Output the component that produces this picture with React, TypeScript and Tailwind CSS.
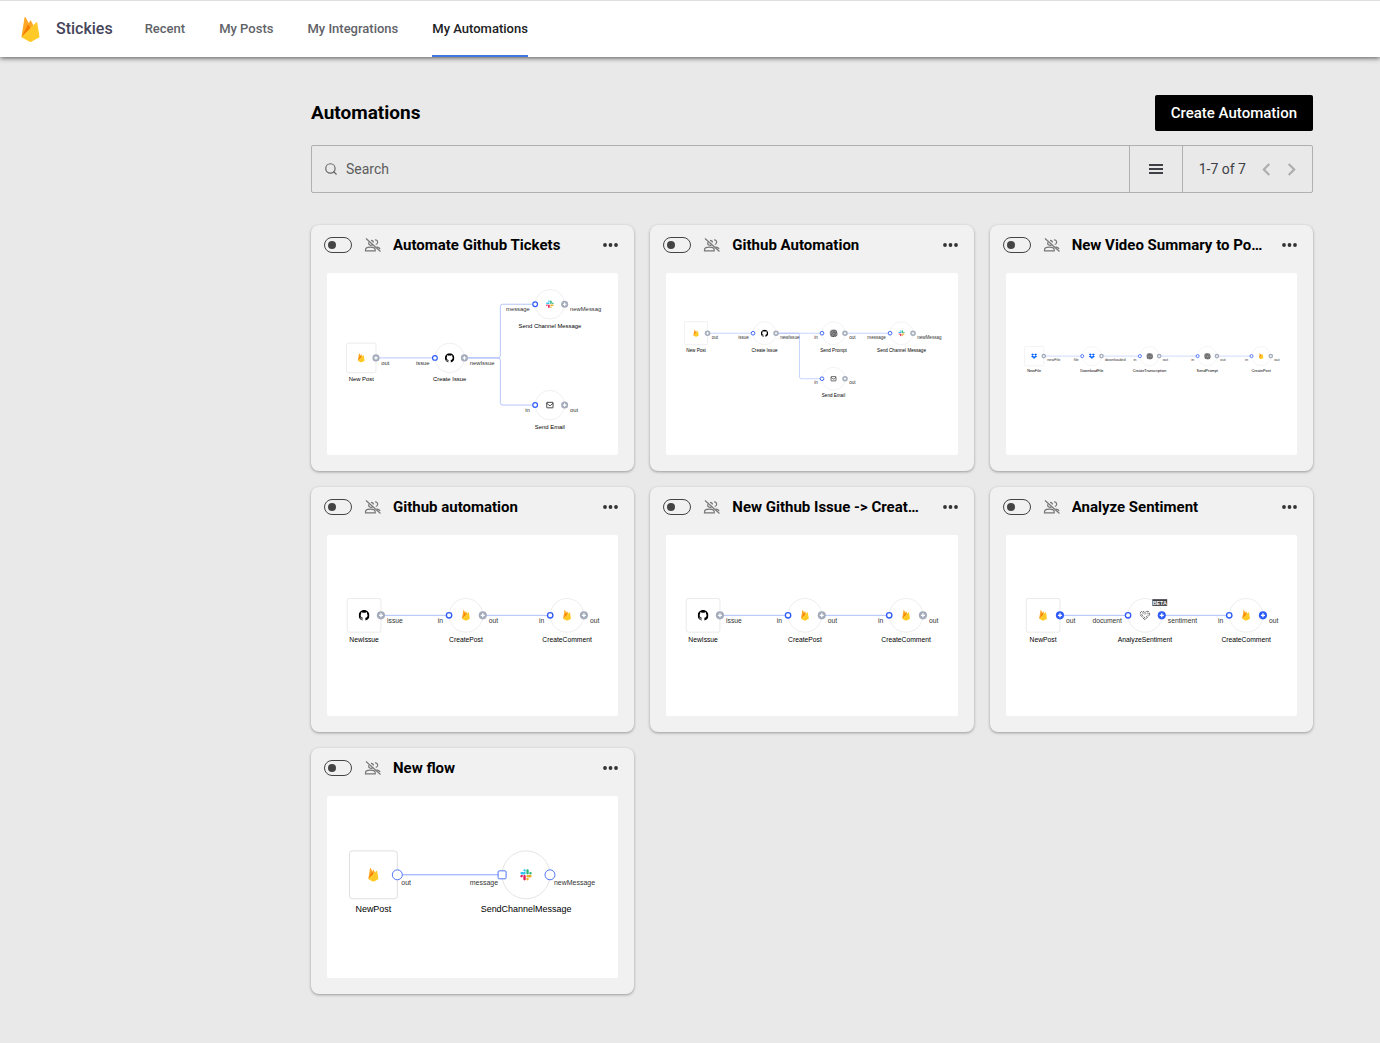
import { useState } from "react";
import type { ReactNode } from "react";
import { SiDropbox, SiGithub, SiOpenai } from "react-icons/si";
import { Search } from "lucide-react";
import { MdChevronLeft, MdChevronRight } from "react-icons/md";

type Brand = "firebase" | "github" | "slack" | "email" | "openai" | "dropbox" | "heart";

interface FlowNode {
  x: number;
  y: number;
  name: string;
  brand: Brand;
  input?: string;
  output: string;
  beta?: boolean;
}

interface Flow {
  title: string;
  width: number;
  height: number;
  nodes: FlowNode[];
  edges: string[];
  variant?: "muted" | "active" | "open";
}

function FirebaseShape() {
  return (
    <>
      <path fill="#FFA726" d="M3.300 19.365L6.255.461A.542.542 0 0 1 7.270.288L12 9z" />
      <path fill="#FFA726" d="M14.800 8.200L12.480 3.665a.542.542 0 0 0-.96 0L3.300 19.365z" />
      <path fill="#F57C00" d="M12.200 11L9.700 6.900L3.300 19.365z" />
      <path
        fill="#FFCA28"
        d="M20.684 19.364l-2.25-14a.54.54 0 0 0-.919-.295L3.316 19.365l7.856 4.427a1.621 1.621 0 0 0 1.588 0z"
      />
    </>
  );
}

function SlackShape() {
  return (
    <>
      <path
        fill="#E01E5A"
        d="M25.8 77.6c0 7.1-5.8 12.9-12.9 12.9S0 84.7 0 77.6s5.8-12.9 12.9-12.9h12.9v12.9zm6.5 0c0-7.1 5.8-12.9 12.9-12.9s12.9 5.8 12.9 12.9v32.3c0 7.1-5.8 12.9-12.9 12.9s-12.9-5.8-12.9-12.9V77.6z"
      />
      <path
        fill="#36C5F0"
        d="M45.2 25.8c-7.1 0-12.9-5.8-12.9-12.9S38.1 0 45.2 0s12.9 5.8 12.9 12.9v12.9H45.2zm0 6.5c7.1 0 12.9 5.8 12.9 12.9s-5.8 12.9-12.9 12.9H12.9C5.8 58.1 0 52.3 0 45.2s5.8-12.9 12.9-12.9h32.3z"
      />
      <path
        fill="#2EB67D"
        d="M97 45.2c0-7.1 5.8-12.9 12.9-12.9s12.9 5.8 12.9 12.9-5.8 12.9-12.9 12.9H97V45.2zm-6.5 0c0 7.1-5.8 12.9-12.9 12.9s-12.9-5.8-12.9-12.9V12.900C64.700 5.800 70.500 0 77.600 0s12.900 5.800 12.900 12.900v32.300z"
      />
      <path
        fill="#ECB22E"
        d="M77.6 97c7.1 0 12.9 5.8 12.9 12.9s-5.8 12.9-12.9 12.9-12.9-5.8-12.9-12.9V97h12.9zm0-6.5c-7.1 0-12.9-5.8-12.9-12.9s5.8-12.9 12.9-12.9h32.3c7.1 0 12.9 5.8 12.9 12.9s-5.8 12.9-12.9 12.9H77.6z"
      />
    </>
  );
}

/* Brand mark centred on a node. */
function BrandMark({ brand, x, y, size }: { brand: Brand; x: number; y: number; size: number }) {
  const box = { x: x - size / 2, y: y - size / 2, width: size, height: size };
  switch (brand) {
    case "firebase":
      return (
        <svg {...box} viewBox="0 0 24 24">
          <FirebaseShape />
        </svg>
      );
    case "slack":
      return (
        <svg {...box} viewBox="-14 -14 151 151">
          <SlackShape />
        </svg>
      );
    case "github":
      return <SiGithub {...box} color="#000000" />;
    case "dropbox":
      return <SiDropbox {...box} color="#0061FF" />;
    case "openai":
      return (
        <g>
          <rect x={x - 8} y={y - 8} width="16" height="16" rx="6" fill="#a3a3a3" />
          <SiOpenai x={x - 7} y={y - 7} width={14} height={14} color="#3f3f46" />
        </g>
      );
    case "email":
      return (
        <svg {...box} viewBox="0 0 24 24" fill="none" stroke="#18181b" strokeWidth="2">
          <rect x="4" y="5" width="16" height="14" rx="1" />
          <path d="M4 7l6 6h4l6-6" />
        </svg>
      );
    case "heart":
      return (
        <svg {...box} viewBox="0 0 24 24" fill="none" stroke="#27272a" strokeWidth="1.600">
          <path d="M12 22L3 12.500a5.500 5.500 0 0 1 0-8c2-2 5.500-2 7.500 0L12 6l1.500-1.500c2-2 5.500-2 7.500 0a5.500 5.500 0 0 1 0 8z" strokeDasharray="7 2" />
          <path d="M12 18l-6.500-7c-1-1.500-1-3 0-4s2.500-1 3.500 0l3 3 3-3c1-1 2.500-1 3.500 0s1 2.500 0 4z" strokeDasharray="4 3" />
        </svg>
      );
  }
}

function Port({ x, y, kind, variant }: { x: number; y: number; kind: "in" | "out"; variant: Flow["variant"] }) {
  if (variant === "open") {
    return kind === "in" ? (
      <rect x={x - 4} y={y - 4} width="8" height="8" rx="1" fill="#fff" stroke="#4f74f5" />
    ) : (
      <circle cx={x} cy={y} r="5" fill="#fff" stroke="#4f74f5" />
    );
  }
  if (kind === "in") {
    return <circle cx={x} cy={y} r="4" fill="#fff" stroke="#2f5bf6" strokeWidth="2" />;
  }
  return (
    <g>
      <circle cx={x} cy={y} r="6" fill={variant === "active" ? "#2f5bf6" : "#a3abba"} />
      <path d={`M${x - 3} ${y}h6M${x} ${y - 3}v6`} stroke="#fff" strokeWidth="2" />
    </g>
  );
}

function FlowDiagram({ flow }: { flow: Flow }) {
  const variant = flow.variant ?? "muted";
  const open = variant === "open";
  const half = open ? 24 : 25;
  const nameClass = open ? "text-[9px]" : "text-[10px]";
  const portClass = open ? "text-[7px]" : "text-[10px]";
  const nameDrop = open ? 37 : 40;
  const portDrop = open ? 10 : 12;
  const gap = open ? 4 : 9;
  return (
    <svg
      viewBox={`0 0 ${flow.width} ${flow.height}`}
      className="block h-full w-full font-['Liberation_Sans',Arial,sans-serif]"
      role="img"
      aria-label={`${flow.title} diagram`}
    >
      {flow.nodes.map((n) =>
        n.input ? (
          <circle key={n.name} cx={n.x} cy={n.y} r={half} fill="#fff" stroke="#e4e4e4" />
        ) : (
          <rect key={n.name} x={n.x - half} y={n.y - half} width={half * 2} height={half * 2} rx="3" fill="#fff" stroke="#dfdfdf" />
        ),
      )}
      {flow.edges.map((d) => (
        <path key={d} d={d} fill="none" stroke="#86a0f8" strokeWidth="1" />
      ))}
      {flow.nodes.map((n) => (
        <g key={n.name}>
          <BrandMark brand={n.brand} x={n.x} y={n.y} size={open ? 14 : 16} />
          {n.beta && (
            <g>
              <rect x={n.x + 11} y={n.y - 24} width="22" height="10" fill="#3f3f46" />
              <text x={n.x + 22} y={n.y - 16} textAnchor="middle" fill="#fff" className="text-[8px] font-bold">
                BETA
              </text>
            </g>
          )}
          {n.input && (
            <>
              <Port x={n.x - half} y={n.y} kind="in" variant={variant} />
              <text x={n.x - half - gap} y={n.y + portDrop} textAnchor="end" fill="#333" className={portClass}>
                {n.input}
              </text>
            </>
          )}
          <Port x={n.x + half} y={n.y} kind="out" variant={variant} />
          <text x={n.x + half + gap} y={n.y + portDrop} fill="#333" className={portClass}>
            {n.output}
          </text>
          <text x={n.x} y={n.y + nameDrop} textAnchor="middle" fill="#000" className={nameClass}>
            {n.name}
          </text>
        </g>
      ))}
    </svg>
  );
}

const issueToComment: Pick<Flow, "width" | "height" | "nodes" | "edges"> = {
  width: 432,
  height: 269,
  nodes: [
    { x: 55, y: 119, name: "NewIssue", brand: "github", output: "issue" },
    { x: 206, y: 119, name: "CreatePost", brand: "firebase", input: "in", output: "out" },
    { x: 356, y: 119, name: "CreateComment", brand: "firebase", input: "in", output: "out" },
  ],
  edges: ["M80 119H181", "M231 119H331"],
};

const flows: Flow[] = [
  {
    title: "Automate Github Tickets",
    width: 494,
    height: 308,
    nodes: [
      { x: 58, y: 144, name: "New Post", brand: "firebase", output: "out" },
      { x: 208, y: 144, name: "Create Issue", brand: "github", input: "issue", output: "newIssue" },
      { x: 378, y: 53, name: "Send Channel Message", brand: "slack", input: "message", output: "newMessag" },
      { x: 378, y: 224, name: "Send Email", brand: "email", input: "in", output: "out" },
    ],
    edges: [
      "M83 144H183",
      "M233 144H290Q294 144 294 140V57Q294 53 298 53H353",
      "M233 144H290Q294 144 294 148V220Q294 224 298 224H353",
    ],
  },
  {
    title: "Github Automation",
    width: 633,
    height: 395,
    nodes: [
      { x: 65, y: 131, name: "New Post", brand: "firebase", output: "out" },
      { x: 214, y: 131, name: "Create Issue", brand: "github", input: "issue", output: "newIssue" },
      { x: 364, y: 131, name: "Send Prompt", brand: "openai", input: "in", output: "out" },
      { x: 512, y: 131, name: "Send Channel Message", brand: "slack", input: "message", output: "newMessag" },
      { x: 364, y: 230, name: "Send Email", brand: "email", input: "in", output: "out" },
    ],
    edges: ["M90 131H189", "M239 131H339", "M389 131H487", "M239 131H286Q290 131 290 135V226Q290 230 294 230H339"],
  },
  {
    title: "New Video Summary to Post with Sentiment",
    width: 757,
    height: 472,
    nodes: [
      { x: 73, y: 216, name: "NewFile", brand: "dropbox", output: "newFile" },
      { x: 223, y: 216, name: "DownloadFile", brand: "dropbox", input: "file", output: "downloaded" },
      { x: 373, y: 216, name: "CreateTranscription", brand: "openai", input: "in", output: "out" },
      { x: 523, y: 216, name: "SendPrompt", brand: "openai", input: "in", output: "out" },
      { x: 663, y: 216, name: "CreatePost", brand: "firebase", input: "in", output: "out" },
    ],
    edges: ["M98 216H198", "M248 216H348", "M398 216H498", "M548 216H638"],
  },
  { title: "Github automation", ...issueToComment },
  { title: "New Github Issue -> Create Post and Comment", ...issueToComment },
  {
    title: "Analyze Sentiment",
    width: 432,
    height: 269,
    variant: "active",
    nodes: [
      { x: 55, y: 119, name: "NewPost", brand: "firebase", output: "out" },
      { x: 206, y: 119, name: "AnalyzeSentiment", brand: "heart", input: "document", output: "sentiment", beta: true },
      { x: 356, y: 119, name: "CreateComment", brand: "firebase", input: "in", output: "out" },
    ],
    edges: ["M80 119H181", "M231 119H331"],
  },
  {
    title: "New flow",
    width: 291,
    height: 182,
    variant: "open",
    nodes: [
      { x: 46, y: 79, name: "NewPost", brand: "firebase", output: "out" },
      { x: 199, y: 79, name: "SendChannelMessage", brand: "slack", input: "message", output: "newMessage" },
    ],
    edges: ["M75 79H171"],
  },
];

function PeopleOffIcon() {
  return (
    <svg width="18" height="16" viewBox="0 0 18 16" fill="none" stroke="#777" strokeWidth="1.200" className="shrink-0" aria-hidden="true">
      <path d="M5 5.200a2.200 2.200 0 0 0 3.800 2.200" />
      <path d="M1.500 13.800v-1c0-1.700 2-2.600 4.800-2.600 2.900 0 4.900.9 4.900 2.600v1z" />
      <path d="M7 3.400c1.600 0 2.400 1 2.400 2.200" />
      <path d="M11 3a2.200 2.200 0 1 1 .8 4.400" />
      <path d="M12.500 9.800c2 .3 3.200 1.100 3.400 2.400" />
      <path d="M2 1.500l14.500 13" />
    </svg>
  );
}

function AutomationCard({ flow }: { flow: Flow }) {
  const [enabled, setEnabled] = useState(false);
  return (
    <article className="min-w-0 rounded-lg bg-[#f1f1f1] px-4 pb-4 shadow-[0_1px_3px_rgba(0,0,0,0.35)]">
      <div className="flex h-12 items-start pt-2">
        <input
          type="checkbox"
          role="switch"
          aria-label={`Enable ${flow.title}`}
          checked={enabled}
          onChange={(e) => setEnabled(e.target.checked)}
          className="relative -ml-[3px] mt-1 h-4 w-7 shrink-0 appearance-none rounded-full border border-[#444] before:absolute before:left-[3px] before:top-[3px] before:size-2 before:rounded-full before:bg-[#444] checked:before:left-[15px]"
        />
        <div className="mx-3 mt-1">
          <PeopleOffIcon />
        </div>
        <h2 className="-ml-px min-w-0 flex-1 truncate text-[15px] leading-6 font-bold text-black">{flow.title}</h2>
        <button type="button" aria-label={`More options for ${flow.title}`} className="ml-4 flex h-6 w-4 shrink-0 items-center justify-center">
          <svg width="16" height="4" viewBox="0 0 16 4" fill="#333" aria-hidden="true">
            <circle cx="3" cy="2" r="1.900" />
            <circle cx="8.500" cy="2" r="1.900" />
            <circle cx="14" cy="2" r="1.900" />
          </svg>
        </button>
      </div>
      <div className="aspect-[77/48] overflow-hidden rounded-xs bg-white">
        <FlowDiagram flow={flow} />
      </div>
    </article>
  );
}

function Tab({ active, children }: { active?: boolean; children: ReactNode }) {
  return (
    <a
      href="#"
      aria-current={active ? "page" : undefined}
      className={
        active
          ? "flex h-full items-center border-t-2 border-b-2 border-t-transparent border-b-[#3f76e0] text-[13px] font-medium text-[#202124]"
          : "flex h-full items-center border-t-2 border-b-2 border-transparent text-[13px] font-medium text-[#5f6368]"
      }
    >
      {children}
    </a>
  );
}

export default function App() {
  return (
    <div className="min-h-screen bg-[#e9e9e9] font-['Roboto',sans-serif] text-[#3f3f46]">
      <header className="flex h-[57px] items-center border-t border-[#dedede] bg-white pl-[18px] shadow-[0_1px_5px_rgba(0,0,0,0.65)]">
        <svg width="25" height="25" viewBox="0 0 24 24" aria-hidden="true">
          <FirebaseShape />
        </svg>
        <span className="ml-[13px] text-base leading-7 font-medium text-[#45455a]">Stickies</span>
        <nav className="ml-8 flex h-full gap-[34px]">
          <Tab>Recent</Tab>
          <Tab>My Posts</Tab>
          <Tab>My Integrations</Tab>
          <Tab active>My Automations</Tab>
        </nav>
      </header>

      <main className="ml-[244px] px-[67px] pt-[38px] pb-12">
        <div className="flex items-center justify-between">
          <h1 className="text-[19px] leading-7 font-bold text-black">Automations</h1>
          <button type="button" className="h-9 rounded-xs bg-black px-4 text-[15px] font-medium text-white">
            Create Automation
          </button>
        </div>

        <div className="mt-[14px] flex h-12 rounded-xs border border-[#b0b0b0]">
          <label className="flex min-w-0 flex-1 items-center gap-2 pl-3">
            <Search size={14} strokeWidth={2} className="shrink-0 text-[#666]" aria-hidden="true" />
            <input
              type="text"
              aria-label="Search"
              placeholder="Search"
              className="min-w-0 flex-1 bg-transparent text-sm outline-none placeholder:text-[#5c5c5c]"
            />
          </label>
          <button
            type="button"
            aria-label="List view"
            className="flex w-[53px] items-center justify-center border-l border-[#b0b0b0]"
          >
            <svg width="14" height="10" viewBox="0 0 14 10" fill="#3f3f46" aria-hidden="true">
              <rect width="14" height="2" />
              <rect y="4" width="14" height="2" />
              <rect y="8" width="14" height="2" />
            </svg>
          </button>
          <div className="flex items-center border-l border-[#b0b0b0] pl-4 pr-2">
            <span className="mr-2 text-sm">1-7 of 7</span>
            <button type="button" aria-label="Previous page" className="text-[#acacac]">
              <MdChevronLeft size={25} />
            </button>
            <button type="button" aria-label="Next page" className="text-[#acacac]">
              <MdChevronRight size={25} />
            </button>
          </div>
        </div>

        <section className="mt-8 grid grid-cols-3 gap-4">
          {flows.map((flow) => (
            <AutomationCard key={flow.title} flow={flow} />
          ))}
        </section>
      </main>
    </div>
  );
}
